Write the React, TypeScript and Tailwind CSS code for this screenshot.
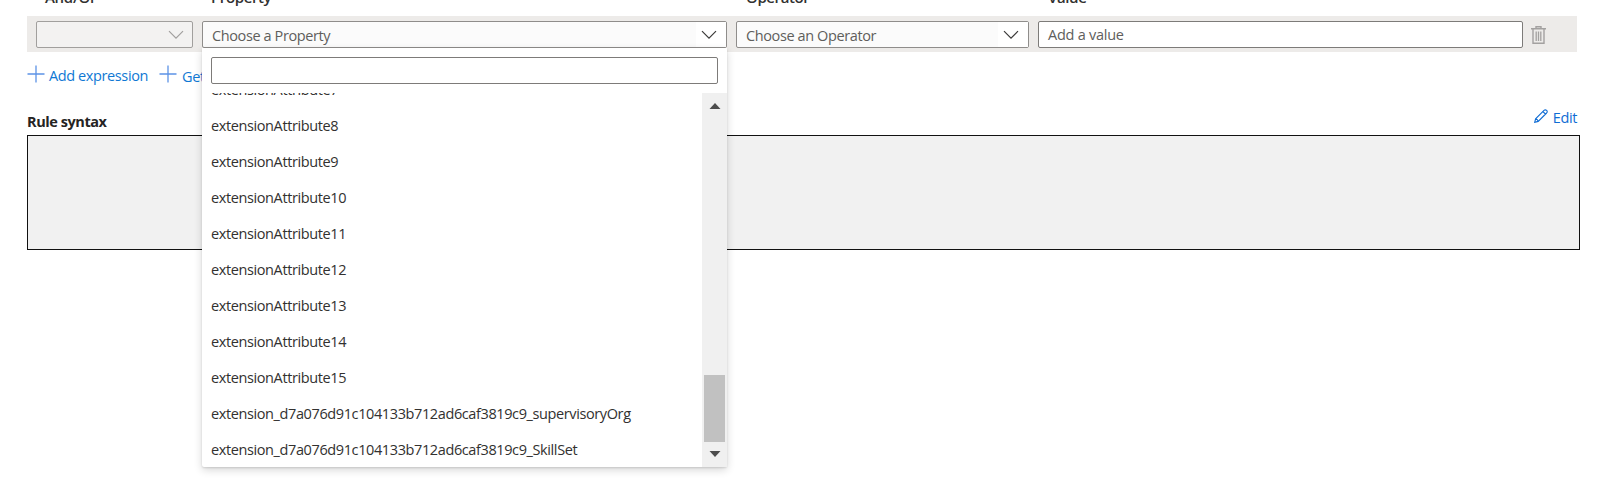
import type { ReactNode } from "react";

const attributes = [
  "extensionAttribute7",
  "extensionAttribute8",
  "extensionAttribute9",
  "extensionAttribute10",
  "extensionAttribute11",
  "extensionAttribute12",
  "extensionAttribute13",
  "extensionAttribute14",
  "extensionAttribute15",
  "extension_d7a076d91c104133b712ad6caf3819c9_supervisoryOrg",
  "extension_d7a076d91c104133b712ad6caf3819c9_SkillSet",
];

function Chevron({ className }: { className: string }) {
  return (
    <svg viewBox="0 0 16 10" className={`h-[10px] w-4 ${className}`} fill="none" stroke="currentColor" strokeWidth="1.2">
      <path d="M1 1.2 8 8.2 15 1.2" />
    </svg>
  );
}

function Plus() {
  return (
    <svg viewBox="0 0 18 18" className="h-[18px] w-[18px] shrink-0" fill="none" stroke="#5c93e6" strokeWidth="1.3">
      <path d="M9 .5v17M.5 9h17" />
    </svg>
  );
}

function Select({ className, children }: { className: string; children: ReactNode }) {
  return (
    <div className={`flex h-[27px] shrink-0 items-center rounded-[2px] border border-[#8f8d8b] bg-[#fbfbfb] pl-[9px] text-[#605e5c] ${className}`}>
      <span className="grow pt-[2px] leading-[20px]">{children}</span>
      <span className="flex h-full w-[30px] items-center bg-white pl-[5px]">
        <Chevron className="text-[#3b3a39]" />
      </span>
    </div>
  );
}

function PropertyMenu() {
  return (
    <div className="absolute top-[27px] -left-px h-[419px] w-[525px] overflow-visible rounded-b-[2px] bg-white pt-[9px] text-[#323130] shadow-[0_3px_8px_rgba(0,0,0,0.16),0_1px_2px_rgba(0,0,0,0.12)]">
      <div className="mx-[9px] h-[27px] rounded-[2px] border border-[#7d7b79] bg-white" />
      <div className="mt-[9px] flex h-[374px]">
        <div className="flex h-full w-[500px] flex-col justify-end overflow-hidden pl-[9px]">
          {attributes.map((name) => (
            <div key={name} className="flex h-9 shrink-0 items-center pt-[2px]">
              {name}
            </div>
          ))}
        </div>
        <div className="flex h-full w-[25px] flex-col items-center bg-[#f0f0f0] text-[#4d4d4d]">
          <svg viewBox="0 0 12 6" className="mt-[10px] h-[6px] w-3" fill="currentColor">
            <path d="M.5 6 6 0l5.500 6z" />
          </svg>
          <div className="mt-[266px] h-[67px] w-[21px] bg-[#c1c1c1]" />
          <svg viewBox="0 0 12 6" className="mt-[9px] h-[6px] w-3" fill="currentColor">
            <path d="M.5 0h11L6 6z" />
          </svg>
        </div>
      </div>
    </div>
  );
}

export default function App() {
  return (
    <div className="h-[483px] w-[1600px] overflow-hidden bg-white pl-[27px] font-['Open_Sans','Noto_Sans',sans-serif] text-[14.5px] tracking-[-0.39px] text-[#323130]">
      <div className="flex h-4 items-end pl-[18px] text-[15px] font-semibold text-[#323130]">
        <div className="mb-[9px] w-[166px] shrink-0 leading-5 tracking-[-0.3px]">And/Or</div>
        <div className="mb-[9px] w-[535px] shrink-0 leading-5">Property</div>
        <div className="mb-[9px] w-[302px] shrink-0 leading-5">Operator</div>
        <div className="mb-[9px] leading-5">Value</div>
      </div>
      <div className="flex h-9 w-[1550px] gap-[9px] bg-[#edebe9] pt-[5px] pl-[9px]">
        <div className="flex h-[27px] w-[157px] shrink-0 items-center justify-end rounded-[2px] border border-[#a19f9d] bg-[#f3f2f1] pr-[8px]">
          <Chevron className="text-[#a19f9d]" />
        </div>
        <div className="relative z-10 h-[27px] w-[525px] shrink-0">
          <Select className="w-[525px]">Choose a Property</Select>
          <div className="ml-px h-0">
            <div className="relative -top-[27px] w-0">
              <PropertyMenu />
            </div>
          </div>
        </div>
        <Select className="w-[293px]">Choose an Operator</Select>
        <div className="flex h-[27px] w-[485px] shrink-0 items-center rounded-[2px] border border-[#7d7b79] bg-white pt-px pl-[9px] tracking-[-0.25px] text-[#605e5c]">
          Add a value
        </div>
        <svg viewBox="0 0 15 18" className="-ml-px mt-[5px] h-[18px] w-[15px]" fill="none" stroke="#a3a1a0">
          <path strokeWidth="1.4" d="M0 2.700h15M5 2.500V.7h5v1.800M2 3v14.300h11V3" />
          <path strokeWidth="1.3" d="M5.200 5.500V15M7.500 5.500V15M9.800 5.500V15" />
        </svg>
      </div>
      <div className="flex h-[47px] items-start pt-[13px] text-[#0f78d4]">
        <Plus />
        <span className="ml-[4px] w-[110px] shrink-0 leading-[22px]">Add expression</span>
        <Plus />
        <span className="mt-px ml-[5px] w-[210px] shrink-0 leading-[22px]">Get</span>
      </div>
      <div className="flex h-9 w-[1550px] justify-between">
        <h2 className="mt-[12px] font-bold leading-[22px] tracking-[-0.43px] text-[#252423]">Rule syntax</h2>
        <div className="mt-[8px] flex h-[22px] text-[#0f6cd4]">
          <svg viewBox="0 0 14 14" className="mt-[2px] mr-[5px] h-[14px] w-[14px]" fill="none" stroke="currentColor" strokeWidth="1.1">
            <path d="M.7 13.300 1.600 9.800 10 1.400Q11.300.2 12.600 1.400T12.600 4L4.200 12.400ZM8.900 2.500 11.500 5.100M1.600 9.800Q3.600 10.200 4.200 12.400" />
          </svg>
          <span className="leading-[22px]">Edit</span>
        </div>
      </div>
      <div className="h-[115px] w-[1553px] border border-[#111] bg-[#f1f1f1]" />
    </div>
  );
}
